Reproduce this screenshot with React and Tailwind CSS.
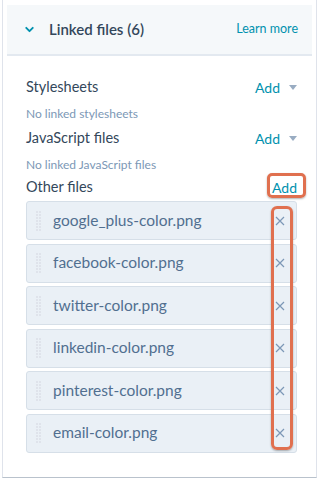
import { ChevronDown } from "lucide-react";

const files = [
  "google_plus-color.png",
  "facebook-color.png",
  "twitter-color.png",
  "linkedin-color.png",
  "pinterest-color.png",
  "email-color.png",
];

function Caret() {
  return (
    <svg width="8" height="5" viewBox="0 0 8 5" className="ml-[9px]">
      <path d="M0 0h8L4 5z" fill="#99acc2" />
    </svg>
  );
}

function DragHandle() {
  return (
    <svg width="6" height="20" viewBox="0 0 6 20" className="shrink-0">
      {[0, 1, 2, 3, 4, 5, 6].map((r) =>
        [0, 1].map((c) => (
          <rect key={`${r}-${c}`} x={c * 3} y={r * 3} width="2" height="2" fill="#dfe3eb" />
        ))
      )}
    </svg>
  );
}

export default function App() {
  return (
    <div
      className="w-[320px] h-[480px] bg-white pl-[2px] pr-[3px] pb-[2px]"
      style={{ fontFamily: "Lato, 'Open Sans', sans-serif" }}
    >
      <div className="relative h-full border-x border-b border-[#dfe3eb] border-b-[#b9c2cc] pt-[5px] px-[4px]">
        {/* header */}
        <div className="h-[51px] bg-[#f5f8fa] border-b-2 border-[#e3e9f0] flex items-center pl-[16px] pr-[14px]">
          <ChevronDown className="w-[13px] h-[13px] text-[#0091ae]" strokeWidth={3.5} />
          <span className="ml-[13px] text-[15px] font-semibold text-[#33475b]">Linked files (6)</span>
          <span className="ml-auto text-[12.5px] text-[#0091ae]">Learn more</span>
        </div>

        <div className="pl-[19px] pr-[15px] pt-[19px]">
          <div className="flex items-center h-[24px]">
            <span className="text-[14.5px] text-[#33475b]">Stylesheets</span>
            <span className="ml-auto flex items-center text-[14px] text-[#0091ae]">
              Add <Caret />
            </span>
          </div>
          <div className="mt-[8px] text-[12px] text-[#7c98b6] h-[14px] leading-[14px]">No linked stylesheets</div>
          <div className="flex items-center h-[24px] mt-[5px]">
            <span className="text-[14.5px] text-[#33475b]">JavaScript files</span>
            <span className="ml-auto flex items-center text-[14px] text-[#0091ae]">
              Add <Caret />
            </span>
          </div>
          <div className="mt-[8px] text-[12px] text-[#7c98b6] h-[14px] leading-[14px]">No linked JavaScript files</div>
          <div className="flex items-center h-[24px] mt-[3px]">
            <span className="text-[14.5px] text-[#33475b]">Other files</span>
            <span className="ml-auto text-[14px] text-[#0091ae]">Add</span>
          </div>

          <div className="mt-[2px] flex flex-col gap-[3.5px]">
            {files.map((f) => (
              <div
                key={f}
                className="h-[39px] bg-[#eaf0f6] border border-[#d6dfe8] rounded-[3px] flex items-center pl-[9px] pr-[11px]"
              >
                <DragHandle />
                <span className="ml-[11px] text-[15.5px] text-[#516f90]">{f}</span>
                <span className="ml-auto">
                  <svg width="10" height="10" viewBox="0 0 10 10">
                    <path d="M1 1l8 8M9 1l-8 8" stroke="#7c98b6" strokeWidth="1.2" />
                  </svg>
                </span>
              </div>
            ))}
          </div>
        </div>

        {/* annotation highlights */}
        <div className="absolute left-[264px] top-[173px] w-[39px] h-[25px] rounded-[5px] border-[3px] border-[#e0704f] shadow-[0_1px_2px_rgba(0,0,0,0.3)]" />
        <div className="absolute left-[268px] top-[206px] w-[22px] h-[244px] rounded-[6px] border-[3px] border-[#e0704f] shadow-[0_1px_2px_rgba(0,0,0,0.3)]" />
      </div>
    </div>
  );
}
